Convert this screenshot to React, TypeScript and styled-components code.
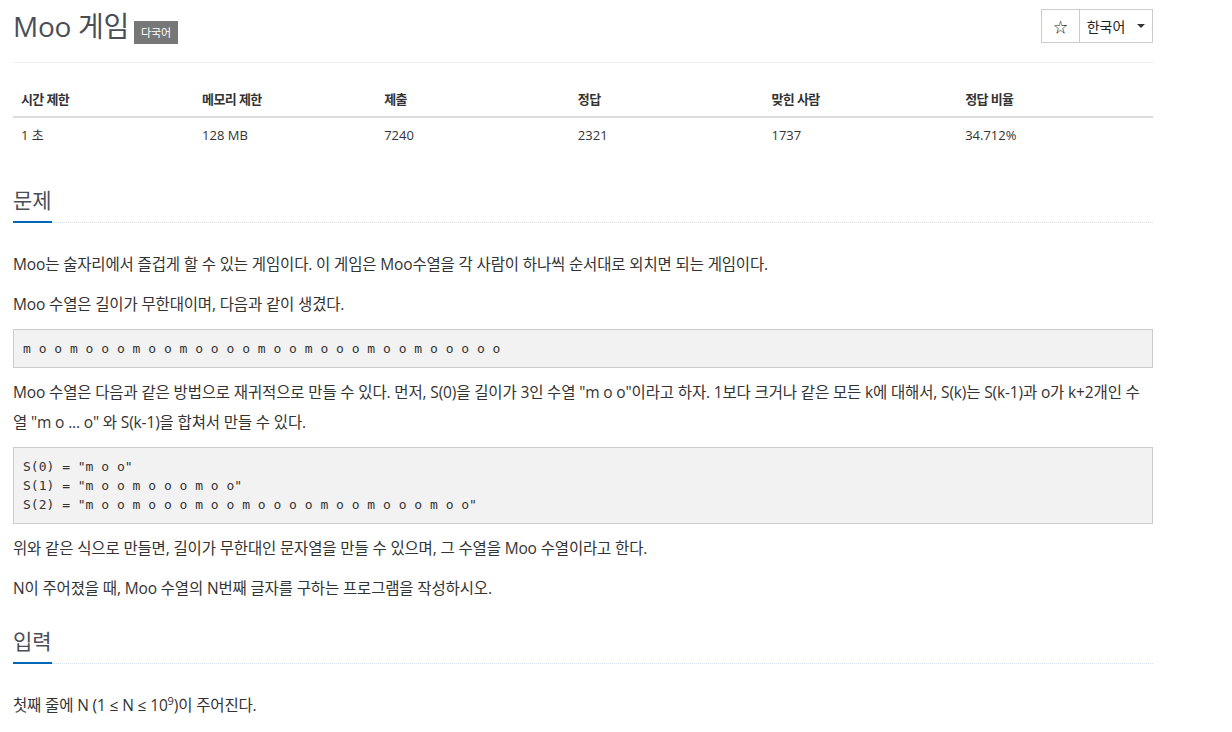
import React from "react";
import styled, { createGlobalStyle } from "styled-components";

const GlobalStyle = createGlobalStyle`
  body {
    margin: 0;
    background: #fff;
    font-family: "Open Sans", "Noto Sans CJK KR", sans-serif;
    color: #333;
  }
`;

const stats = [
  { head: "시간 제한", value: "1 초", width: 182 },
  { head: "메모리 제한", value: "128 MB", width: 182 },
  { head: "제출", value: "7240", width: 194 },
  { head: "정답", value: "2321", width: 194 },
  { head: "맞힌 사람", value: "1737", width: 194 },
  { head: "정답 비율", value: "34.712%", width: 194 },
];

export default function App() {
  return (
    <Page>
      <GlobalStyle />
      <Header>
        <Title>
          Moo 게임 <Label>다국어</Label>
        </Title>
        <BtnGroup>
          <Btn>☆</Btn>
          <Btn $wide>
            한국어 <Caret />
          </Btn>
        </BtnGroup>
      </Header>

      <Table>
        <thead>
          <tr>
            {stats.map((s) => (
              <Th key={s.head} style={{ width: s.width }}>
                {s.head}
              </Th>
            ))}
          </tr>
        </thead>
        <tbody>
          <tr>
            {stats.map((s) => (
              <Td key={s.head}>{s.value}</Td>
            ))}
          </tr>
        </tbody>
      </Table>

      <Section>
        <Headline>
          <span>문제</span>
        </Headline>
        <P>
          Moo는 술자리에서 즐겁게 할 수 있는 게임이다. 이 게임은 Moo수열을 각
          사람이 하나씩 순서대로 외치면 되는 게임이다.
        </P>
        <P>Moo 수열은 길이가 무한대이며, 다음과 같이 생겼다.</P>
        <Pre>m o o m o o o m o o m o o o o m o o m o o o m o o m o o o o o</Pre>
        <P>
          Moo 수열은 다음과 같은 방법으로 재귀적으로 만들 수 있다. 먼저, S(0)을
          길이가 3인 수열 "m o o"이라고 하자. 1보다 크거나 같은 모든 k에
          대해서, S(k)는 S(k-1)과 o가 k+2개인 수열 "m o ... o" 와 S(k-1)을
          합쳐서 만들 수 있다.
        </P>
        <Pre>
          {`S(0) = "m o o"
S(1) = "m o o m o o o m o o"
S(2) = "m o o m o o o m o o m o o o o m o o m o o o m o o"`}
        </Pre>
        <P>
          위와 같은 식으로 만들면, 길이가 무한대인 문자열을 만들 수 있으며, 그
          수열을 Moo 수열이라고 한다.
        </P>
        <P>N이 주어졌을 때, Moo 수열의 N번째 글자를 구하는 프로그램을 작성하시오.</P>
      </Section>

      <Section>
        <Headline>
          <span>입력</span>
        </Headline>
        <P>
          첫째 줄에 N (1 ≤ N ≤ 10<sup>9</sup>)이 주어진다.
        </P>
      </Section>
    </Page>
  );
}

const Page = styled.div`
  width: 1140px;
  padding-left: 13px;
`;

const Header = styled.div`
  display: flex;
  justify-content: space-between;
  align-items: flex-start;
  padding: 9px 0 19px;
  border-bottom: 1px solid #eee;
`;

const Title = styled.h1`
  margin: 0;
  font-size: 28px;
  font-weight: 400;
  line-height: 34px;
  letter-spacing: -0.3px;
  color: #4a4f57;
  display: flex;
  align-items: flex-end;
  gap: 5px;
`;

const Label = styled.span`
  display: inline-flex;
  align-items: center;
  height: 23px;
  padding: 0 7px;
  margin-bottom: -1px;
  background: #777;
  color: #fff;
  font-size: 11px;
  line-height: 1;
  letter-spacing: 0;
`;

const BtnGroup = styled.div`
  display: flex;
`;

const Btn = styled.div<{ $wide?: boolean }>`
  display: flex;
  align-items: center;
  justify-content: center;
  gap: 12px;
  height: 32px;
  width: ${(p) => (p.$wide ? "72px" : "37px")};
  border: 1px solid #ccc;
  margin-left: -1px;
  font-size: 14px;
  color: #222;
  background: #fff;
`;

const Caret = styled.span`
  width: 0;
  height: 0;
  border-top: 4px solid #333;
  border-left: 4px solid transparent;
  border-right: 4px solid transparent;
`;

const Table = styled.table`
  width: 1140px;
  margin: 18px 0 34px;
  border-collapse: collapse;
  font-size: 13px;
`;

const Th = styled.th`
  text-align: left;
  font-weight: 700;
  padding: 9px 8px 8px;
  line-height: 18px;
  letter-spacing: -0.6px;
  border-bottom: 2px solid #ddd;
`;

const Td = styled.td`
  padding: 8px 8px;
  line-height: 18px;
`;

const Section = styled.section`
  margin-top: 24px;
`;

const Headline = styled.h2`
  margin: 0 0 27px;
  font-size: 21px;
  font-weight: 400;
  line-height: 28px;
  color: #4a4f57;
  border-bottom: 1px dotted #d5dde6;
  span {
    display: inline-block;
    padding-bottom: 7px;
    margin-bottom: -1px;
    border-bottom: 2px solid #0068b8;
  }
`;

const P = styled.p`
  margin: 0 0 10px;
  font-size: 15.5px;
  line-height: 29.5px;
  letter-spacing: -0.15px;
  color: #333;
  sup {
    font-size: 11px;
    line-height: 0;
  }
`;

const Pre = styled.pre`
  margin: 0 0 10px;
  padding: 9px 9px;
  background: #f2f2f2;
  border: 1px solid #ccc;
  font-family: "DejaVu Sans Mono", monospace;
  font-size: 13px;
  line-height: 19px;
  color: #333;
  white-space: pre-wrap;
`;
